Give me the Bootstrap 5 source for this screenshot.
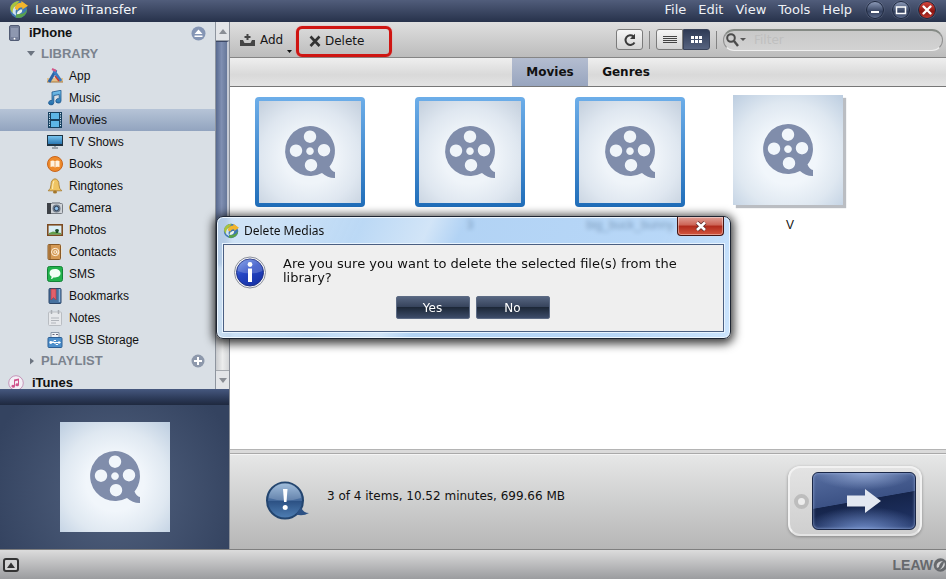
<!DOCTYPE html>
<html lang="en">
<head>
<meta charset="utf-8">
<meta name="viewport" content="width=device-width, initial-scale=1">
<title>Leawo iTransfer</title>
<link href="https://cdn.jsdelivr.net/npm/bootstrap@5.3.0/dist/css/bootstrap.min.css" rel="stylesheet">
<style>
body{font-family:"DejaVu Sans",Verdana,sans-serif;font-size:12px;line-height:14px;color:#111;background:#fff}
button{font:inherit;line-height:inherit}
svg{flex:none;display:block}
.titlebar{height:22px;gap:6px;padding:0 10px 3px 8px;background:linear-gradient(#515d7b,#27324b);color:#f4f6fa}
.titlebar a{color:#eef1f6;text-decoration:none}
.app-title{font-size:13px}
.menu-links{gap:12px;font-size:13px}
.win-btn{width:18px;height:18px;border-radius:50%;border:1px solid #1f2940;background:linear-gradient(#8c9ab8,#35425f 60%,#5d6b8b);color:#fff;box-shadow:0 0 1px #aab4c8}
.win-close{background:linear-gradient(#d6453c,#8d1510 60%,#c03a30)}
.side{width:230px;flex:none;border-right:1px solid #8a8f98;background:#d9dfe5}
.side-list{font-family:"Liberation Sans",Arial,sans-serif;overflow:hidden;height:367px}
.tree{background:#d9dfe5;overflow:hidden;border-right:1px solid #8e959f}
.tree-row{height:22px;color:#111;text-decoration:none}
.tree-top{padding:0 9px 0 8px;gap:8px;font-weight:bold;font-size:13px}
.tree-group{height:21px;padding:0 10px 2px 27px;gap:6px;font-weight:bold;font-size:13px;color:#7b838e}
.tree-item{padding-left:47px;gap:6px}
.tree-item.active{background:linear-gradient(#b6c4d7,#92a4bf)}
.scroll-track{width:13px;background:linear-gradient(90deg,#c9cbce,#eceded 50%,#d4d6d8)}
.scroll-end{height:19px;padding:0;border:0;border-bottom:1px solid #999fa8;background:#e3e5e8}
.scroll-end.down{border-bottom:0;border-top:1px solid #a5a9af}
.scroll-thumb{height:225px;background:linear-gradient(90deg,#596a8f,#7f8fb2 50%,#667799);border-top:1px solid #3c4866;border-right:2px solid #c5cad4}
.side-divider{height:16px;background:linear-gradient(#46587f,#2c3a58 60%,#1f293f)}
.preview{height:144px;background:radial-gradient(circle at 50% 60%,#52627f,#344360 90%)}
.thumb{width:110px;height:110px;background:radial-gradient(circle at 50% 55%,#f1f6fb 35%,#dfe8f1 65%,#bccde0)}
.toolbar{height:36px;padding:0 3px 0 9px;background:linear-gradient(#dfdfdf,#bcbcbc);border-bottom:1px solid #858585;font-size:12px}
.tool{background:none;border:0;padding:0;color:#161616;gap:4px}
.add-wrap{height:26px;width:53px}
.hot{width:96px;height:31px;margin-top:3px;border:3px solid #cf1512;border-radius:6px;padding:0 10px;box-shadow:0 0 1px #f55}
.tool-group{gap:6px}
.tbtn{width:27px;height:21px;padding:0;border:1px solid #7b7b7b;border-radius:3px;background:linear-gradient(#f6f6f6,#d3d3d3)}
.tbtn.on{background:linear-gradient(#2f3b56,#56637f);border-color:#39435a}
.vsep{width:1px;height:18px;background:#838383}
.search{width:220px;height:22px;border-radius:11px;border:1px solid #8f8f8f;border-top:2px solid #858a85;border-bottom-color:#efefef;background:linear-gradient(#c9c9c9,#d2d2d2);gap:4px;padding-left:2px}
.search input{border:0;background:none;outline:0;min-width:0;padding:0;font-size:12px}
.search input::placeholder{color:#bfbfbf;opacity:1}
.tabs{height:29px;background:linear-gradient(#efefef,#d9d9d9 60%,#e4e4e4);border-bottom:1px solid #777;font-weight:bold;padding-left:282px}
.tabs button{background:none;border:0;font-weight:bold;width:76px;padding:0;color:#111}
.tabs button.on{background:linear-gradient(#b4bdd0,#98a5bf)}
.grid-area{padding-top:8px;font-family:"Liberation Sans",Arial,sans-serif}
.media{width:160px;gap:9px;background:none;border:0;padding:0;color:#111}
.thumb-box{width:114px;height:114px}
.media .thumb{box-shadow:3px 3px 1px #babdc2}
.media.sel .thumb-box{padding:2px}
.media.sel .thumb{border-radius:4px;border:4px solid transparent;box-shadow:none;background:radial-gradient(circle at 50% 55%,#eff4f9 35%,#dfe7f0 65%,#c3cfdd) padding-box,linear-gradient(#6daee9,#1f6db9) border-box}
.media.sel .thumb svg{margin:-4px}
.grip{height:5px;background:#dadada;border-top:1px solid #b4b4b4;border-bottom:1px solid #a9a9a9}
.info{height:95px;padding:0 24px 2px 35px;background:linear-gradient(#e6e7e7,#b6b6b6);border-top:1px solid #f5f5f5}
.info-text{padding-bottom:11px}
.device{width:134px;height:70px;padding:4px;border:2px solid #f2f2f2;border-bottom-color:#e4e4e4;border-radius:12px;background:linear-gradient(#e3e3e3,#cfcfcf);box-shadow:0 1px 3px #888}
.home-dot{width:15px;height:15px;border-radius:50%;border:4px solid #bdbdbd;background:#ededed}
.go{width:104px;height:58px;border:1px solid #1a2747;border-radius:6px;padding:0;background:radial-gradient(ellipse 60% 45% at 50% 105%,#7390cc,transparent),radial-gradient(ellipse 50% 30% at 50% 0,#8ea3cf,transparent),linear-gradient(170deg,#566da0 0,#3c5285 48%,#15244a 49%,#22366a);box-shadow:inset 0 0 3px #9fb4de}
.foot{height:30px;padding-left:3px;background:linear-gradient(#dcdcdc,#9b9c9f);border-top:1px solid #7f7f7f}
.brand{font-family:"Liberation Sans",Arial,sans-serif;font-weight:bold;font-size:14px;color:#66696d}
.eject{background:none;border:0;padding:0}
.dialog-box{position:absolute;left:calc(50% - 257px);top:216px;width:515px;padding:0 6px 6px;border:1px solid #1d2532;border-radius:7px;background:linear-gradient(115deg,rgba(195,220,244,.8) 8%,rgba(165,204,242,.75) 26%,rgba(195,220,245,.75) 38%,rgba(152,196,241,.75) 44%,rgba(160,202,245,.75) 80%,rgba(190,221,252,.8));backdrop-filter:blur(2px);box-shadow:inset 0 0 0 1px #eef7ff,0 2px 10px 3px rgba(0,0,0,.75)}
.dialog-head{height:27px;font-family:"Noto Sans","Open Sans",sans-serif;font-size:12px;gap:5px}
.dialog-x{width:47px;height:19px;padding:0;border:1px solid #451512;border-top:0;border-radius:0 0 4px 4px;background:linear-gradient(#e0a096,#cc6354 45%,#b02a1b 50%,#d4573f);box-shadow:inset 0 0 0 1px rgba(255,255,255,.4)}
.dialog-body-box{background:#efefef;border:1px solid #4a5f82;box-shadow:0 0 0 1px #e8f4ff;min-height:88px;padding:11px 10px}
.msg{font-size:13px;padding:1px 0 0 17px;max-width:425px}
.answers{gap:6px;padding:7px 2px 0 0}
.ans{width:74px;height:23px;padding:0;color:#fff;border:1px solid #5d6b84;border-radius:2px;background:linear-gradient(#566580,#36435b 48%,#1d2838 50%,#3d4c69)}
</style>
<script src="https://cdn.jsdelivr.net/npm/bootstrap@5.3.0/dist/js/bootstrap.bundle.min.js"></script>
</head>
<body class="d-flex flex-column min-vh-100 position-relative">

<svg width="0" height="0" class="position-absolute" aria-hidden="true">
  <defs>
    <linearGradient id="gBlue" x2="0" y2="1"><stop stop-color="#7cc8f2"/><stop offset="1" stop-color="#1d6aa8"/></linearGradient>
    <linearGradient id="gOrb" x2="0" y2="1"><stop stop-color="#8fb2d6"/><stop offset=".5" stop-color="#43689a"/><stop offset=".52" stop-color="#2c5184"/><stop offset="1" stop-color="#4f7fb4"/></linearGradient>
    <linearGradient id="gInfo" x2=".6" y2="1"><stop stop-color="#6f93e6"/><stop offset=".5" stop-color="#2546c4"/><stop offset="1" stop-color="#1733a8"/></linearGradient>
  </defs>
  <symbol id="reel" viewBox="0 0 110 110">
    <path fill="#808dab" fill-rule="evenodd" d="M55 29a25 25 0 0 1 19.500 40.600q2 5 5.500 5.400v6q-7 .3-13-5A25 25 0 1 1 55 29zM55 33.500a6.200 6.200 0 1 0 .01 0zM41 47.500a6.200 6.200 0 1 0 .01 0zM69 47a6.200 6.200 0 1 0 .01 0zM56 62a6.200 6.200 0 1 0 .01 0zM55 50.300a3.800 3.800 0 1 0 .01 0z"/>
  </symbol>
  <symbol id="leawo" viewBox="0 0 20 20">
    <circle cx="10" cy="10" r="9" fill="#3f78b5"/>
    <path d="M2 6Q5 1 11 1L8 5Q4 8 4 14 0 10 2 6z" fill="#a9c43c"/>
    <path d="M4 14q-1-5 3-8l1 3q-2 3 0 8z" fill="#cfe3f2"/>
    <path d="M7 18.500c7 1.500 12-3 12-9-2 5-6 6-11 5z" fill="#5aa24b"/>
    <path d="M6 9q1-6 7-6V1l7 5-6 4V8q-4-1-5 3z" fill="#f3b52b"/>
    <path d="M14 10q0 5-6 5l1-3 3-2z" fill="#eef5e8"/>
  </symbol>
</svg>

<header class="titlebar d-flex align-items-center">
  <svg width="21" height="19" viewBox="0 0 20 20"><use href="#leawo"/></svg>
  <span class="app-title">Leawo iTransfer</span>
  <nav class="menu-links d-flex ms-auto" aria-label="Menu">
    <a href="#">File</a><a href="#">Edit</a><a href="#">View</a><a href="#">Tools</a><a href="#">Help</a>
  </nav>
  <div class="d-flex gap-2 ps-1 ms-1">
    <button class="win-btn p-0" aria-label="Minimize"><svg width="16" height="16"><path d="M4 10h8" stroke="#fff" stroke-width="2"/></svg></button>
    <button class="win-btn p-0" aria-label="Maximize"><svg width="16" height="16"><path d="M3.500 5h9v6.500h-9z" fill="none" stroke="#fff" stroke-width="1.500"/></svg></button>
    <button class="win-btn win-close p-0" aria-label="Close"><svg width="16" height="16"><path d="M4.500 4.500l7 7m0-7l-7 7" stroke="#fff" stroke-width="2.400" stroke-linecap="round"/></svg></button>
  </div>
</header>

<div class="d-flex flex-grow-1">
  <aside class="side d-flex flex-column">
    <div class="side-list d-flex">
      <nav class="tree flex-grow-1" aria-label="Library">
        <a href="#" class="tree-row tree-top d-flex align-items-center">
          <svg width="13" height="16"><rect x="1.500" y=".5" width="10" height="15" rx="1.500" fill="#76809a" stroke="#515b74"/><path d="M3 3h7v9H3z" fill="#8e98b0"/><circle cx="6.500" cy="13.700" r=".9" fill="#fff"/></svg>
          <span class="flex-grow-1">iPhone</span>
          <svg width="15" height="15"><circle cx="7.500" cy="7.500" r="7" fill="#8495b4"/><path d="M3.500 8l4-4.500 4 4.500zM3.500 9.500h8v1.500h-8z" fill="#fff"/></svg>
        </a>
        <a href="#" class="tree-row tree-group d-flex align-items-center"><svg width="8" height="8"><path d="M0 1h8L4 6z" fill="#6c7480"/></svg>LIBRARY</a>

        <a href="#" class="tree-row tree-item d-flex align-items-center"><svg width="16" height="16"><path d="M0 10h16v4H0z" fill="#e5c189"/><path d="M0 14h16" stroke="#a9783c"/><path d="M9 2L2 14" stroke="#2a64a8" stroke-width="3"/><path d="M7 3l7 10" stroke="#3b7cc4" stroke-width="3"/><path d="M5 1l4 2" stroke="#d55386" stroke-width="2"/><path d="M8 8l4 5" stroke="#c83b32" stroke-width="1.500"/></svg>App</a>
        <a href="#" class="tree-row tree-item d-flex align-items-center"><svg width="16" height="16"><path fill-rule="evenodd" d="M5 2l9-1.700V11a2.600 2.200 0 1 1-1.800-2.200V4.500L6.800 5.600v7.200A2.600 2.200 0 1 1 5 10.600z" fill="url(#gBlue)" stroke="#1d558c" stroke-width=".8"/></svg>Music</a>
        <a href="#" class="tree-row tree-item active d-flex align-items-center" aria-current="page"><svg width="16" height="16"><rect x="1" width="14" height="16" fill="#17405f"/><path d="M4 1h8v6H4zM4 9h8v6H4z" fill="#5db5e6"/><path d="M2.500 1v14M13.500 1v14" stroke="#cfe6f5" stroke-dasharray="1.200 1.200"/></svg>Movies</a>
        <a href="#" class="tree-row tree-item d-flex align-items-center"><svg width="16" height="16"><rect x=".5" y="1.500" width="15" height="10" fill="url(#gBlue)" stroke="#1f3444"/><path d="M1 10.500h14" stroke="#263440"/><path d="M5 14h6M8 12v2" stroke="#9aa2aa" stroke-width="2"/></svg>TV Shows</a>
        <a href="#" class="tree-row tree-item d-flex align-items-center"><svg width="16" height="16"><circle cx="8" cy="8" r="7.500" fill="#ee8a2b" stroke="#c9641a"/><path d="M3.500 5q3-1 4.500.5Q9.500 4 12.500 5v6q-3-.8-4.500.5Q6.500 10 3.500 11z" fill="#fff2df"/><path d="M8 5.500v6" stroke="#e7a15e"/></svg>Books</a>
        <a href="#" class="tree-row tree-item d-flex align-items-center"><svg width="16" height="16"><path d="M8 .8q4 .7 4 6 0 4 2.800 6H1.200Q4 10.800 4 6.800 4 1.500 8 .8z" fill="#efc462" stroke="#a5772a" stroke-width=".8"/><path d="M7 3q-1.500 2-1.400 8" stroke="#fff0bd" fill="none"/><ellipse cx="8" cy="14" rx="2" ry="1.500" fill="#a5772a"/></svg>Ringtones</a>
        <a href="#" class="tree-row tree-item d-flex align-items-center"><svg width="16" height="16"><rect x=".5" y="3.500" width="15" height="10" rx="1" fill="#cfd3d8" stroke="#777d84"/><path d="M0 3h4v11H0z" fill="#3d4147"/><path d="M5 2h8v2H5z" fill="#9aa0a8"/><circle cx="9.500" cy="8.500" r="4" fill="#6c7887"/><circle cx="9.500" cy="8.500" r="2.200" fill="#8fc0ea" stroke="#2d3e55"/></svg>Camera</a>
        <a href="#" class="tree-row tree-item d-flex align-items-center"><svg width="16" height="16"><rect x=".8" y="2.800" width="14.400" height="10.400" fill="#d9edf6" stroke="#7c4a20" stroke-width="1.600"/><path d="M2 11l4-1.500L14 11v1.500H2z" fill="#63a04d"/><path d="M8 8q2-2 4 0l-1 3H9z" fill="#1e4d2a"/></svg>Photos</a>
        <a href="#" class="tree-row tree-item d-flex align-items-center"><svg width="16" height="16"><rect x="1" y=".5" width="12.500" height="15" rx="1" fill="#d59a55" stroke="#8a5a26"/><path d="M3 1v14" stroke="#7e5123"/><path d="M14.500 2v12" stroke="#efe3cf" stroke-dasharray="3 1"/><circle cx="8.200" cy="8" r="3.700" fill="none" stroke="#fff1dc"/><circle cx="8.200" cy="8" r="1.400" fill="none" stroke="#fff1dc"/><path d="M9.800 6.500v2.500q1 1 2-.3" fill="none" stroke="#fff1dc"/></svg>Contacts</a>
        <a href="#" class="tree-row tree-item d-flex align-items-center"><svg width="16" height="16"><rect x=".5" y=".5" width="15" height="15" rx="2" fill="#22b24c" stroke="#128336"/><path d="M8 3c3.500 0 5.500 2 5.500 4.300S11.500 11.500 8 11.500q-1 0-1.600-.1Q5.500 13 3.800 13q.9-1 .7-2.400Q2.500 9.500 2.500 7.300 2.500 3 8 3z" fill="#f4fff6"/></svg>SMS</a>
        <a href="#" class="tree-row tree-item d-flex align-items-center"><svg width="16" height="16"><rect x="2" y=".5" width="12" height="15" rx="1" fill="#46719f" stroke="#2b4568"/><path d="M12.500 1v13" stroke="#8fb4da" stroke-width="1.500"/><path d="M4 1h5v11L6.500 9.500 4 12z" fill="#e2606b" stroke="#b03642" stroke-width=".6"/></svg>Bookmarks</a>
        <a href="#" class="tree-row tree-item d-flex align-items-center"><svg width="16" height="16"><rect x="1.500" y="2" width="13" height="13.500" rx="1" fill="#e6e8eb" stroke="#b9bdc2"/><path d="M4.500 0v4M11.500 0v4" stroke="#a9adb3" stroke-width="1.500"/><path d="M4 8h8M4 10.500h8M4 13h5" stroke="#b0b4ba"/></svg>Notes</a>
        <a href="#" class="tree-row tree-item d-flex align-items-center"><svg width="16" height="16"><path d="M4 .5h8V6H4z" fill="#f0f3f6" stroke="#8a98a8"/><path d="M5.500 2.500h2M9 2.500h2" stroke="#667"/><rect x="1" y="5.500" width="14" height="10" rx="1" fill="#4c8fcb" stroke="#2b5f96"/><path d="M3 10.500h9M5 10.500l2-2h2M7 10.500l2 2h2" stroke="#fff" fill="none"/><circle cx="3.800" cy="10.500" r="1.400" fill="#fff"/><path d="M11.500 8.700l2.500 1.800-2.500 1.800z" fill="#fff"/></svg>USB Storage</a>

        <a href="#" class="tree-row tree-group d-flex align-items-center"><svg width="8" height="8"><path d="M3 1l4 3-4 3.500z" fill="#6c7480"/></svg><span class="flex-grow-1">PLAYLIST</span>
          <svg width="14" height="14"><circle cx="7" cy="7" r="6.500" fill="#8d98ab"/><path d="M7 3v8M3 7h8" stroke="#fff" stroke-width="2"/></svg></a>
        <a href="#" class="tree-row tree-top d-flex align-items-center">
          <svg width="16" height="16"><circle cx="8" cy="8" r="7.300" fill="#f3f0f7" stroke="#c694b8"/><path d="M6 4.500l5-1v6.300a1.800 1.500 0 1 1-1-1.300V5.500L7 6.200v5a1.800 1.500 0 1 1-1-1.300z" fill="#d0558e"/></svg>iTunes</a>
      </nav>
      <div class="scroll-track d-flex flex-column">
        <button class="scroll-end" aria-label="Scroll up"><svg width="8" height="5" class="m-auto"><path d="M0 5l4-5 4 5z" fill="#8a8e95"/></svg></button>
        <div class="scroll-thumb"></div>
        <button class="scroll-end down mt-auto" aria-label="Scroll down"><svg width="8" height="5" class="m-auto"><path d="M0 0h8L4 5z" fill="#8a8e95"/></svg></button>
      </div>
    </div>
    <div class="side-divider"></div>
    <div class="preview flex-grow-1 d-flex align-items-center justify-content-center">
      <div class="thumb"><svg width="110" height="110"><use href="#reel"/></svg></div>
    </div>
  </aside>

  <main class="flex-grow-1 d-flex flex-column">
    <div class="toolbar d-flex align-items-center">
      <div class="add-wrap d-flex align-items-center">
        <button class="tool d-flex align-items-center"><svg width="17" height="14"><path d="M1 7h3l1.500 3h6L13 7h3v6H1z" fill="#454545"/><path d="M8.500 1v6M5.500 4h6" stroke="#454545" stroke-width="2"/></svg>Add</button>
        <svg width="5" height="3" class="align-self-end ms-auto"><path d="M0 0h5L2.500 3z" fill="#111"/></svg>
      </div>
      <button class="tool hot d-flex align-items-center ms-1"><svg width="12" height="12"><path d="M1.500 1.500l9 9.500M10.500 1.500L1.500 11" stroke="#333" stroke-width="2.600"/></svg>Delete</button>
      <div class="tool-group d-flex align-items-center ms-auto">
        <button class="tbtn d-flex align-items-center justify-content-center" aria-label="Refresh"><svg width="14" height="14"><path d="M11.500 9.500A4.800 4.800 0 1 1 10.500 3.500" fill="none" stroke="#3a3a3a" stroke-width="2"/><path d="M12 .8V6H7z" fill="#3a3a3a"/></svg></button>
        <div class="vsep"></div>
        <div class="d-flex">
          <button class="tbtn d-flex align-items-center justify-content-center rounded-end-0" aria-label="List view"><svg width="14" height="10"><path d="M0 1.500h14M0 3.500h14M0 5.500h14M0 7.500h14" stroke="#444"/></svg></button>
          <button class="tbtn on d-flex align-items-center justify-content-center rounded-start-0" aria-label="Grid view"><svg width="12" height="8"><path d="M0 0h3v3H0zM4 0h3v3H4zM8 0h3v3H8zM0 4h3v3H0zM4 4h3v3H4zM8 4h3v3H8z" fill="#fff"/></svg></button>
        </div>
        <div class="vsep"></div>
        <label class="search d-flex align-items-center">
          <svg width="20" height="14"><circle cx="5" cy="5" r="3.800" fill="none" stroke="#4b4b4b" stroke-width="2"/><path d="M8 8l4 5" stroke="#4b4b4b" stroke-width="2.400"/><path d="M14 5h6l-3 3z" fill="#555"/></svg>
          <input class="flex-grow-1 ms-1" type="text" placeholder="Filter" aria-label="Filter">
        </label>
      </div>
    </div>
    <div class="tabs d-flex">
      <button class="on">Movies</button><button>Genres</button>
    </div>
    <div class="grid-area flex-grow-1 d-flex flex-wrap align-items-start align-content-start">
      <button class="media sel d-flex flex-column align-items-center" aria-label="Movie"><span class="thumb-box"><span class="thumb d-block"><svg width="110" height="110"><use href="#reel"/></svg></span></span></button>
      <button class="media sel d-flex flex-column align-items-center"><span class="thumb-box"><span class="thumb d-block"><svg width="110" height="110"><use href="#reel"/></svg></span></span><span>3</span></button>
      <button class="media sel d-flex flex-column align-items-center"><span class="thumb-box"><span class="thumb d-block"><svg width="110" height="110"><use href="#reel"/></svg></span></span><span>big_buck_bunny</span></button>
      <button class="media d-flex flex-column align-items-center"><span class="thumb-box"><span class="thumb d-block"><svg width="110" height="110"><use href="#reel"/></svg></span></span><span>V</span></button>
    </div>
    <div class="grip"></div>
    <div class="info d-flex align-items-center">
      <svg width="46" height="40" viewBox="0 0 46 40"><path d="M20 1.500a18 18 0 1 1 0 36 18 18 0 0 1 0-36z" fill="url(#gOrb)" stroke="#23456f" stroke-width="2"/><path d="M36 26q2 6 8 6-6 3.500-13 1.500z" fill="#2c5184"/><path d="M4 17a16 15 0 0 1 32 0q-16 5-32 0z" fill="#fff" opacity=".18"/><path d="M18 8h4.500l-1 13h-2.500z" fill="#fff"/><circle cx="20.200" cy="26.500" r="2.500" fill="#fff"/></svg>
      <span class="info-text ps-3">3 of 4 items, 10.52 minutes, 699.66 MB</span>
      <div class="device d-flex align-items-center justify-content-between ms-auto">
        <span class="home-dot"></span>
        <button class="go d-flex align-items-center justify-content-center" aria-label="Transfer"><svg width="34" height="24"><path d="M0 6.500h18V0l16 12-16 12v-6.500H0z" fill="#e3e8f1"/></svg></button>
      </div>
    </div>
  </main>
</div>

<footer class="foot d-flex align-items-center justify-content-between overflow-hidden">
  <button class="eject" aria-label="Toggle preview"><svg width="16" height="14"><rect x="1" y="1" width="14" height="12" rx="2" fill="#d3d3d3" stroke="#333" stroke-width="2"/><path d="M4 10l4-5.500L12 10z" fill="#333"/></svg></button>
  <span class="brand d-flex align-items-center">LEAW<svg width="13" height="14"><circle cx="7.500" cy="7" r="6.800" fill="#66696d"/><path d="M4 10q-2-6 6-7-4 3-4 6M11 4q3 5-5 8 4-3 5-8" fill="#cfd0d2"/></svg></span>
</footer>

<section class="dialog-box" role="dialog" aria-labelledby="dlg-title">
  <div class="dialog-head d-flex align-items-center">
    <svg width="16" height="16" viewBox="0 0 20 20"><use href="#leawo"/></svg>
    <span id="dlg-title">Delete Medias</span>
    <button class="dialog-x ms-auto align-self-start d-flex align-items-center justify-content-center" aria-label="Close dialog"><svg width="14" height="12"><path d="M3 2.500l8 7.500M11 2.500L3 10" stroke="#5b2a2a" stroke-width="4.200"/><path d="M3 2.500l8 7.500M11 2.500L3 10" stroke="#fff" stroke-width="2.600"/></svg></button>
  </div>
  <div class="dialog-body-box">
    <div class="d-flex align-items-start">
      <svg width="32" height="33" viewBox="0 0 32 33"><circle cx="16" cy="16.500" r="15.500" fill="#f4f4f4" stroke="#8a8f9c"/><circle cx="16" cy="16.500" r="13.500" fill="url(#gInfo)" stroke="#1d2f86"/><path d="M3.500 15a12.500 12 0 0 1 25 0q-12 5-25 0z" fill="#fff" opacity=".2"/><circle cx="16" cy="8.500" r="2.400" fill="#fff"/><path d="M14 12.500h4V26h-4z" fill="#fff"/></svg>
      <div class="msg">Are you sure you want to delete the selected file(s) from the library?</div>
    </div>
    <div class="answers d-flex justify-content-center">
      <button class="ans">Yes</button><button class="ans">No</button>
    </div>
  </div>
</section>
</body>
</html>
